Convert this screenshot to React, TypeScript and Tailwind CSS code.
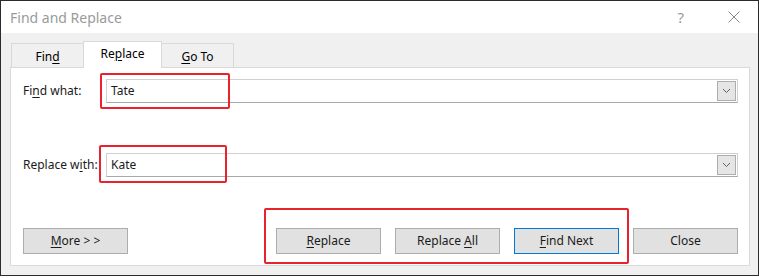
import React from "react";

function Key({ children }: { children: React.ReactNode }) {
  return <span className="underline underline-offset-2">{children}</span>;
}

function Tab({ active, children }: { active?: boolean; children: React.ReactNode }) {
  return (
    <div
      className={
        active
          ? "relative z-10 -mb-px flex h-[27px] w-[79px] items-center justify-center border border-b-0 border-[#d9d9d9] bg-white pb-0.5"
          : "-mx-px flex h-[24px] w-[73px] items-center justify-center border border-b-0 border-[#d9d9d9] bg-[#f0f0f0] pt-0.5 first:ml-0"
      }
    >
      <span>{children}</span>
    </div>
  );
}

function Combo({ value }: { value: string }) {
  return (
    <div className="flex h-[24px] flex-1 border border-[#d0d0d0] border-b-[#a8a8a8] bg-white">
      <div className="flex flex-1 items-center pl-[4px] text-[#1a1a1a]">{value}</div>
      <div className="m-[1px] flex w-[19px] items-center justify-center border border-[#adadad] bg-[#e5e5e5]">
        <svg width="9" height="6" viewBox="0 0 9 6" fill="none">
          <path d="M1 1l3.5 3.5L8 1" stroke="#606060" strokeWidth="1" />
        </svg>
      </div>
    </div>
  );
}

function Btn({ children, focus }: { children: React.ReactNode; focus?: boolean }) {
  return (
    <button
      className={
        "flex h-[26px] w-[105px] items-center justify-center border bg-[#e1e1e1] text-[#1a1a1a] " +
        (focus ? "border-[#0078d7]" : "border-[#adadad]")
      }
    >
      <span>{children}</span>
    </button>
  );
}

export default function App() {
  return (
    <div className="h-[278px] w-[759px] bg-white font-['Noto_Sans',sans-serif] text-[12px]">
      <div className="flex h-[276px] flex-col border border-[#2b2b2b] bg-[#f0f0f0]">
        <div className="flex h-[32px] items-center bg-white pl-[9px] pr-[18px]">
          <span className="flex-1 text-[14px] text-[#9a9a9a]">Find and Replace</span>
          <span className="mr-[44px] text-[15px] text-[#9a9a9a]">?</span>
          <svg width="12" height="12" viewBox="0 0 12 12">
            <path d="M0.5 0.5l11 11M11.5 0.5l-11 11" stroke="#8a8a8a" strokeWidth="1" />
          </svg>
        </div>

        <div className="flex flex-1 flex-col px-[9px] pt-[8px]">
          <div className="flex items-end pl-[1px]">
            <Tab>
              Fin<Key>d</Key>
            </Tab>
            <Tab active>
              Re<Key>p</Key>lace
            </Tab>
            <Tab>
              <Key>G</Key>o To
            </Tab>
          </div>

          <div className="relative flex h-[199px] w-[740px] flex-col border border-[#d9d9d9] bg-white px-[11px] pt-[11px] text-[#1a1a1a]">
            <div className="flex items-center">
              <span className="w-[84px] pl-px">
                Fi<Key>n</Key>d what:
              </span>
              <Combo value="Tate" />
            </div>
            <div className="mt-[50px] flex items-center">
              <span className="w-[84px] pl-px">
                Replace w<Key>i</Key>th:
              </span>
              <Combo value="Kate" />
            </div>

            <div className="mt-auto mb-[11px] flex pl-[1px]">
              <Btn>
                <Key>M</Key>ore &gt; &gt;
              </Btn>
              <div className="ml-auto flex gap-[14px]">
                <Btn>
                  <Key>R</Key>eplace
                </Btn>
                <Btn>
                  Replace <Key>A</Key>ll
                </Btn>
                <Btn focus>
                  <Key>F</Key>ind Next
                </Btn>
                <Btn>Close</Btn>
              </div>
            </div>

            <div className="pointer-events-none absolute left-[89px] top-[5px] h-[36px] w-[130px] rounded-[2px] border-2 border-[#e8232d]" />
            <div className="pointer-events-none absolute left-[88px] top-[77px] h-[38px] w-[128px] rounded-[2px] border-2 border-[#e8232d]" />
            <div className="pointer-events-none absolute left-[253px] top-[140px] h-[56px] w-[365px] rounded-[2px] border-2 border-[#e8232d]" />
          </div>
        </div>
      </div>
    </div>
  );
}
